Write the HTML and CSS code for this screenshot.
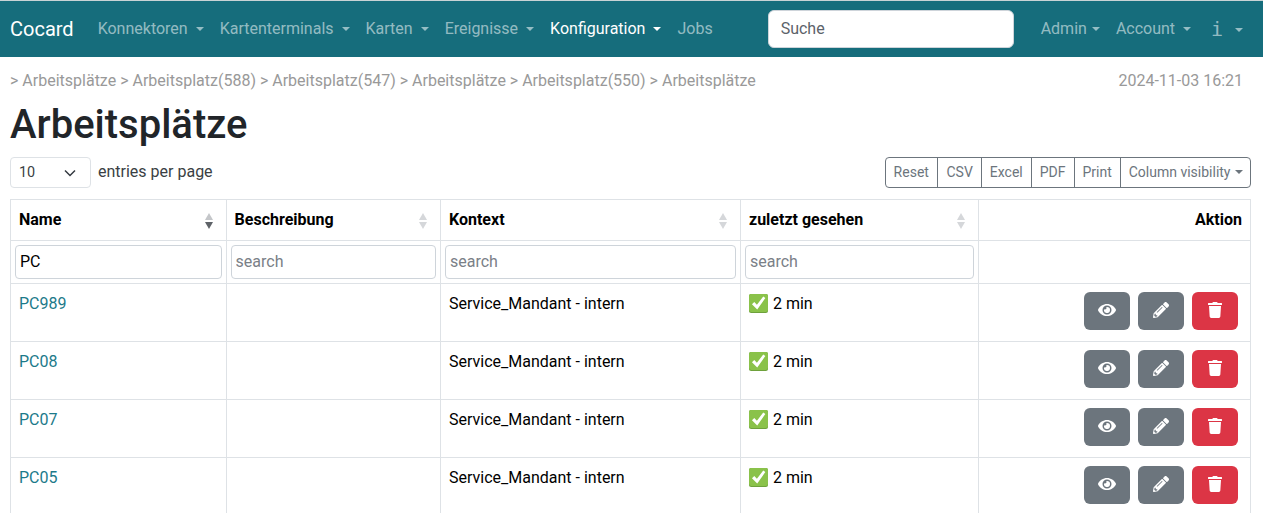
FILE: index.html
```html
<!DOCTYPE html>
<html lang="de">
<head>
    <meta charset="UTF-8">
    <meta name="viewport" content="width=device-width, initial-scale=1.0">
    <title>Arbeitsplätze</title>
    <link rel="stylesheet" href="styles.css">
</head>
<body>
    <svg class="defs" width="0" height="0">
        <symbol id="eye" viewBox="0 0 576 512"><path fill="currentColor" d="M572.5 241.4C518.3 135.6 410.9 64 288 64S57.7 135.6 3.5 241.4a32.4 32.4 0 0 0 0 29.2C57.7 376.4 165.1 448 288 448s230.3-71.6 284.5-177.4a32.4 32.4 0 0 0 0-29.2zM288 400a144 144 0 1 1 144-144 143.900 143.900 0 0 1-144 144zm0-240a95.300 95.300 0 0 0-25.300 3.800 47.900 47.900 0 0 1-66.900 66.900A95.800 95.800 0 1 0 288 160z"/></symbol>
        <symbol id="pencil" viewBox="0 0 512 512"><path fill="currentColor" d="M497.900 142.100l-46.100 46.100c-4.700 4.700-12.300 4.700-17 0l-111-111c-4.700-4.700-4.700-12.300 0-17l46.100-46.100c18.700-18.700 49.100-18.700 67.900 0l60.100 60.100c18.800 18.700 18.800 49.100 0 67.900zM284.200 99.800L21.600 362.400.4 483.900c-2.900 16.400 11.400 30.600 27.800 27.800l121.500-21.300 262.600-262.600c4.700-4.700 4.700-12.300 0-17l-111-111c-4.800-4.700-12.400-4.700-17.100 0zM124.100 339.900c-5.500-5.500-5.500-14.300 0-19.800l154-154c5.500-5.500 14.300-5.500 19.800 0s5.500 14.300 0 19.800l-154 154c-5.500 5.500-14.300 5.500-19.800 0zM88 424h48v36.300l-64.500 11.300-31.100-31.100L51.700 376H88v48z"/></symbol>
        <symbol id="trash" viewBox="0 0 448 512"><path fill="currentColor" d="M432 32H312l-9.400-18.700A24 24 0 0 0 281.100 0H166.800a23.700 23.700 0 0 0-21.400 13.300L136 32H16A16 16 0 0 0 0 48v32a16 16 0 0 0 16 16h416a16 16 0 0 0 16-16V48a16 16 0 0 0-16-16zM53.200 467a48 48 0 0 0 47.900 45h245.800a48 48 0 0 0 47.900-45L416 128H32z"/></symbol>
        <symbol id="check" viewBox="0 0 18 18"><rect x="0" y="0" width="18" height="18" rx="2" fill="#6ea13c"/><rect x="0" y="0" width="18" height="17" rx="2" fill="#8ac24a"/><path d="M2.800 9.600l2.200-2.100 2.500 2.800 6-8 2 1.500-7.700 10.900z" fill="#fff"/></symbol>
    </svg>

    <nav class="navbar">
        <a class="brand">Cocard</a>
        <ul class="nav-links">
            <li class="caret">Konnektoren</li>
            <li class="caret">Kartenterminals</li>
            <li class="caret">Karten</li>
            <li class="caret">Ereignisse</li>
            <li class="caret active">Konfiguration</li>
            <li>Jobs</li>
        </ul>
        <input class="nav-search" type="text" placeholder="Suche">
        <ul class="nav-links nav-right">
            <li class="caret tight">Admin</li>
            <li class="caret">Account</li>
            <li class="caret info">i</li>
        </ul>
    </nav>

    <main class="content">
        <div class="crumb-row">
            <div class="crumbs">&gt; Arbeitsplätze &gt; Arbeitsplatz(588) &gt; Arbeitsplatz(547) &gt; Arbeitsplätze &gt; Arbeitsplatz(550) &gt; Arbeitsplätze</div>
            <div class="stamp">2024-11-03 16:21</div>
        </div>
        <h1>Arbeitsplätze</h1>

        <div class="toolbar">
            <div class="length">
                <div class="length-select">10
                    <svg width="12" height="8" viewBox="0 0 12 8"><path d="M1 1.500l5 5 5-5" fill="none" stroke="#343a40" stroke-width="1.500"/></svg>
                </div>
                <span class="length-label">entries per page</span>
            </div>
            <div class="btn-group">
                <span class="btn-reset">Reset</span><span>CSV</span><span>Excel</span><span>PDF</span><span class="btn-print">Print</span><span class="btn-caret">Column visibility</span>
            </div>
        </div>

        <table class="data">
            <colgroup>
                <col class="c1"><col class="c2"><col class="c3"><col class="c4"><col class="c5">
            </colgroup>
            <thead>
                <tr class="head">
                    <th class="sort sort-down">Name</th>
                    <th class="sort">Beschreibung</th>
                    <th class="sort">Kontext</th>
                    <th class="sort">zuletzt gesehen</th>
                    <th class="right">Aktion</th>
                </tr>
                <tr class="filter">
                    <td><input type="text" value="PC" class="filled"></td>
                    <td><input type="text" placeholder="search"></td>
                    <td><input type="text" placeholder="search"></td>
                    <td><input type="text" placeholder="search"></td>
                    <td></td>
                </tr>
            </thead>
            <tbody>
                <tr>
                    <td><a>PC989</a></td><td></td><td>Service_Mandant - intern</td>
                    <td><svg class="ok"><use href="#check"/></svg> 2 min</td>
                    <td><div class="actions">
                        <button class="btn"><svg class="i-eye"><use href="#eye"/></svg></button>
                        <button class="btn"><svg class="i-pen"><use href="#pencil"/></svg></button>
                        <button class="btn danger"><svg class="i-trash"><use href="#trash"/></svg></button>
                    </div></td>
                </tr>
                <tr>
                    <td><a>PC08</a></td><td></td><td>Service_Mandant - intern</td>
                    <td><svg class="ok"><use href="#check"/></svg> 2 min</td>
                    <td><div class="actions">
                        <button class="btn"><svg class="i-eye"><use href="#eye"/></svg></button>
                        <button class="btn"><svg class="i-pen"><use href="#pencil"/></svg></button>
                        <button class="btn danger"><svg class="i-trash"><use href="#trash"/></svg></button>
                    </div></td>
                </tr>
                <tr>
                    <td><a>PC07</a></td><td></td><td>Service_Mandant - intern</td>
                    <td><svg class="ok"><use href="#check"/></svg> 2 min</td>
                    <td><div class="actions">
                        <button class="btn"><svg class="i-eye"><use href="#eye"/></svg></button>
                        <button class="btn"><svg class="i-pen"><use href="#pencil"/></svg></button>
                        <button class="btn danger"><svg class="i-trash"><use href="#trash"/></svg></button>
                    </div></td>
                </tr>
                <tr>
                    <td><a>PC05</a></td><td></td><td>Service_Mandant - intern</td>
                    <td><svg class="ok"><use href="#check"/></svg> 2 min</td>
                    <td><div class="actions">
                        <button class="btn"><svg class="i-eye"><use href="#eye"/></svg></button>
                        <button class="btn"><svg class="i-pen"><use href="#pencil"/></svg></button>
                        <button class="btn danger"><svg class="i-trash"><use href="#trash"/></svg></button>
                    </div></td>
                </tr>
            </tbody>
        </table>
    </main>
</body>
</html>
```

FILE: styles.css
```css
html, body {
    height: 100%;
    overflow: hidden;
}
body {
    margin: 0;
    font-family: Roboto, "Liberation Sans", sans-serif;
    font-size: 16px;
    line-height: 24px;
    color: #212529;
    background-color: #fff;
}
.defs {
    position: absolute;
}

/* navbar */
.navbar {
    display: flex;
    align-items: center;
    height: 56px;
    padding-left: 10px;
    border-top: 1px solid #c9d3d5;
    background-color: #166d7c;
}
.brand {
    font-size: 20px;
    line-height: 30px;
    color: #fff;
    margin-right: 24px;
}
.nav-links {
    display: flex;
    gap: 16px;
    list-style: none;
    margin: 0;
    padding: 0;
    color: rgba(255, 255, 255, 0.55);
}
.nav-links .active {
    color: #fff;
}
.caret::after {
    content: "";
    display: inline-block;
    margin-left: 8px;
    vertical-align: 3px;
    border-top: 4.800px solid;
    border-left: 4.800px solid transparent;
    border-right: 4.800px solid transparent;
}
.caret.tight::after {
    margin-left: 5px;
}
.info {
    font-family: "DejaVu Sans Mono", monospace;
    font-size: 20px;
    margin-left: 4px;
}
.info::after {
    margin-left: 12px;
    vertical-align: 4px;
}
.nav-search {
    width: 246px;
    height: 38px;
    box-sizing: border-box;
    margin-left: 55px;
    padding: 0 12px 2px;
    border: 1px solid #ced4da;
    border-radius: 6px;
    font: inherit;
    background: #fff;
}
.nav-search::placeholder {
    color: #5c636a;
    opacity: 1;
}
.nav-right {
    margin-left: 27px;
}

/* content */
.content {
    padding: 0 12px 0 10px;
}
.crumb-row {
    display: flex;
    justify-content: space-between;
    padding: 12px 8px 0 0;
    color: #999;
}
.crumbs, .stamp {
    line-height: 24px;
}
h1 {
    margin: 8px 0 0;
    font-size: 40px;
    font-weight: 500;
    line-height: 48px;
}
.toolbar {
    display: flex;
    justify-content: space-between;
    align-items: center;
    margin-top: 8px;
    height: 31px;
}
.length {
    display: flex;
    align-items: center;
    gap: 7px;
    color: #3a3f44;
}
.length-label {
    padding-bottom: 2px;
}
.length-select {
    display: flex;
    justify-content: space-between;
    align-items: center;
    box-sizing: border-box;
    width: 81px;
    height: 31px;
    padding: 0 14px 0 8px;
    border: 1px solid #dee2e6;
    border-radius: 4px;
    font-size: 14.400px;
}
.btn-group {
    display: flex;
    height: 31px;
    box-sizing: border-box;
    border: 1px solid #6c757d;
    border-radius: 4px;
    font-size: 14px;
    line-height: 29px;
    color: #6c757d;
}
.btn-group span {
    padding: 0 8px;
    border-left: 1px solid #6c757d;
}
.btn-group .btn-reset {
    padding-right: 8.600px;
    border-left: 0;
}
.btn-group .btn-print {
    padding-right: 8.400px;
}
.btn-group .btn-caret {
    padding: 0 7.500px;
}
.btn-caret::after {
    content: "";
    display: inline-block;
    margin-left: 4px;
    vertical-align: 3px;
    border-top: 4px solid;
    border-left: 4px solid transparent;
    border-right: 4px solid transparent;
}

/* table */
.data {
    width: 1241px;
    margin-top: 11px;
    border-collapse: collapse;
    table-layout: fixed;
    color: #000;
}
.c1 { width: 215.600px; }
.c2 { width: 214.400px; }
.c3 { width: 300px; }
.c4 { width: 238px; }
.data th, .data td {
    border: 1px solid #dee2e6;
    padding: 8px;
    vertical-align: top;
    text-align: left;
}
.data .head th {
    height: 24px;
    font-weight: 700;
}
.data .right {
    text-align: right;
}
.sort {
    position: relative;
}
.sort::before, .sort::after {
    content: "";
    position: absolute;
    right: 13px;
    width: 0;
    border-left: 4.200px solid transparent;
    border-right: 4.200px solid transparent;
}
.sort::before {
    top: 13px;
    border-bottom: 7.500px solid #d5d7da;
}
.sort::after {
    top: 22px;
    border-top: 7.500px solid #d5d7da;
}
.sort-down::before {
    border-bottom-color: #c4c6c9;
}
.sort-down::after {
    border-top-color: #5f6368;
}
.data .filter td {
    height: 42px;
    padding: 4px;
    box-sizing: border-box;
}
.filter input {
    display: block;
    width: 100%;
    height: 34px;
    box-sizing: border-box;
    padding: 0 4px 2px;
    border: 1px solid #ced4da;
    border-radius: 4px;
    font: inherit;
    color: #000;
}
.filter input::placeholder {
    color: #7a8087;
    opacity: 1;
}
tbody td {
    height: 41px;
}
.data a {
    color: #1c7a8a;
}
.ok {
    width: 19px;
    height: 19px;
    margin-right: 1px;
    vertical-align: -4px;
}
.actions {
    display: flex;
    justify-content: flex-end;
    gap: 8px;
    padding-right: 4px;
}
.btn {
    display: flex;
    align-items: center;
    justify-content: center;
    width: 46px;
    height: 38px;
    border: 0;
    border-radius: 6px;
    padding: 0;
    color: #fff;
    background-color: #6c757d;
}
.danger {
    background-color: #dc3545;
}
.i-eye {
    width: 18px;
    height: 16px;
    margin-top: -2px;
}
.i-pen {
    width: 16px;
    height: 16px;
    margin-top: -2px;
}
.i-trash {
    width: 14px;
    height: 16px;
    margin-top: -2px;
}
```
